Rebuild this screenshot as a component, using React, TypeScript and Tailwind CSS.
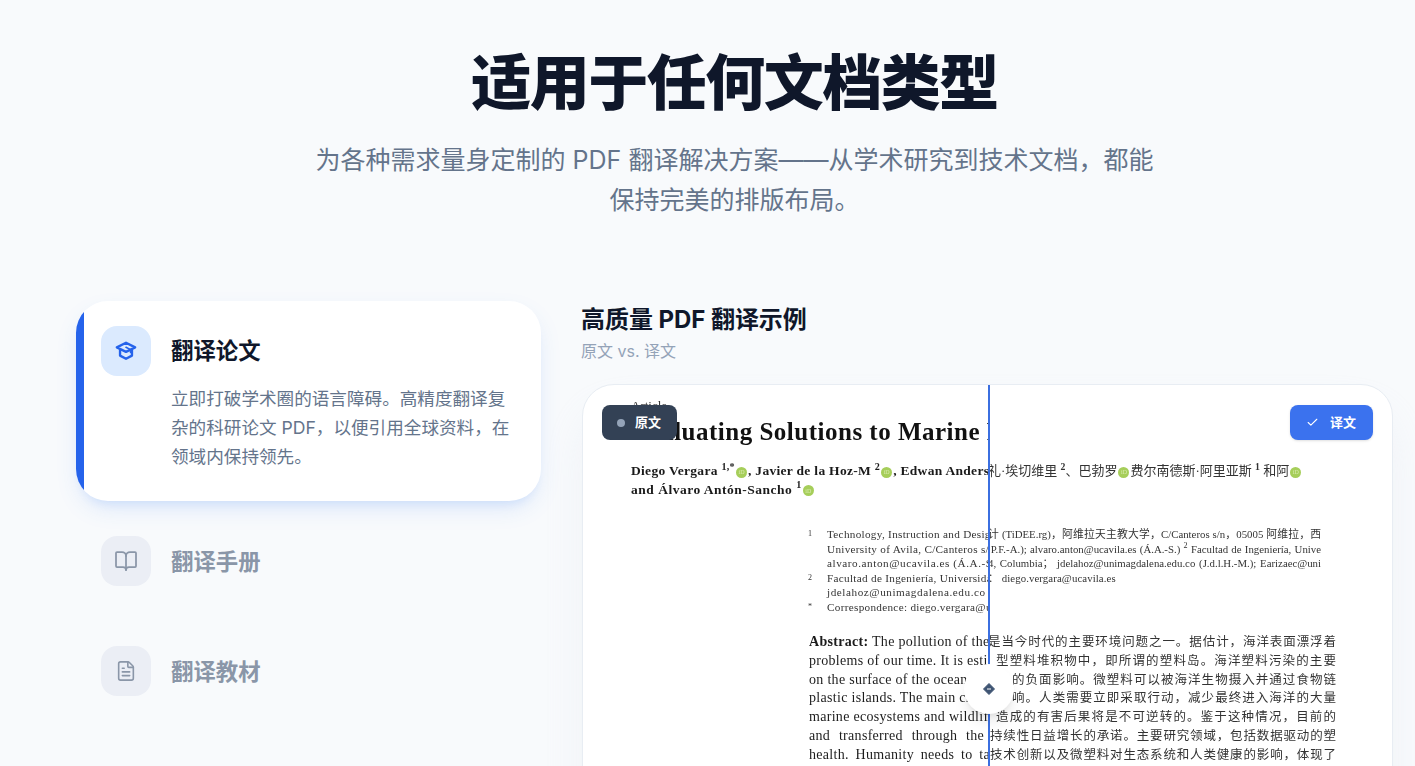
import { BookOpen, Check, FileText } from "lucide-react";

const SANS = "font-['Inter','Noto_Sans_CJK_SC',sans-serif]";

function Orcid() {
  return (
    <span className="inline-flex items-center justify-center w-[11px] h-[11px] rounded-full bg-[#a6ce5a] align-[1px] mx-[1px] overflow-hidden text-[6px] leading-none font-normal tracking-normal text-[#d9ecb0]">
      iD
    </span>
  );
}

function CapIcon() {
  return (
    <svg width="22" height="22" viewBox="0 0 24 24" fill="none" stroke="#2563eb" strokeWidth="2.6" strokeLinejoin="round" strokeLinecap="round">
      <path d="M12 3 22 8l-10 5L2 8z" />
      <path d="M5.500 10.500v6.500L12 20.500l6.500-3.500v-6.500" />
      <path d="M12 8l5 2.500v3" strokeWidth="1.800" />
    </svg>
  );
}

function DiamondIcon() {
  return (
    <svg width="12" height="12" viewBox="0 0 12 12">
      <path d="M6 0.500 11.500 6 6 11.500 0.500 6z" fill="#3f5573" stroke="#3f5573" strokeLinejoin="round" />
      <path d="M4 6h4" stroke="#fff" strokeWidth="1" />
    </svg>
  );
}

function NavRow({ title, children }: { title: string; children: React.ReactNode }) {
  return (
    <div className="flex items-center gap-5 h-[100px] pl-[25px]">
      <div className="w-[50px] h-[50px] rounded-2xl bg-[#ebeef5] flex items-center justify-center text-[#8a96a8]">{children}</div>
      <div className="mt-[2px] text-[22.400px] font-bold text-[#8a96a8]">{title}</div>
    </div>
  );
}

function Aff({ mark, wide, children }: { mark?: string; wide?: boolean; children: React.ReactNode }) {
  return (
    <div className="flex h-[14.500px] leading-[14.500px] text-[11.200px] text-[#333] whitespace-nowrap">
      <span className="w-[19px] shrink-0 text-[8px] tracking-normal">{mark}</span>
      <span className={wide ? "tracking-[0.55px]" : "tracking-[0.3px]"}>{children}</span>
    </div>
  );
}

function AbsL({ spread, children }: { spread?: string; children: React.ReactNode }) {
  return (
    <div className={`h-[18.800px] leading-[18.800px] text-[14px] tracking-[0.3px] text-[#1c1c1c] whitespace-nowrap ${spread ?? ""}`}>{children}</div>
  );
}

function AbsR({ indent, children }: { indent?: string; children: React.ReactNode }) {
  return <div className={`h-[18.800px] leading-[18.800px] text-[12.500px] text-[#333] [text-align-last:justify] ${indent ?? ""}`}>{children}</div>;
}

function AffR({ children }: { children: React.ReactNode }) {
  return <div className="h-[14.500px] leading-[14.500px] text-[10.800px] text-[#333] pr-[15px] [text-align-last:justify]">{children}</div>;
}

export default function App() {
  return (
    <div className={`h-[766px] overflow-hidden bg-[#f8fafc] pl-[76px] pr-[22px] ${SANS}`}>
      <header className="pt-[38px] text-center">
        <h1 className="text-6xl leading-[90px] font-extrabold tracking-tight text-[#0f172a]">适用于任何文档类型</h1>
        <p className="mt-3 text-[25px] leading-[40px] text-[#64748b] max-w-[860px] mx-auto">
          为各种需求量身定制的 PDF 翻译解决方案——从学术研究到技术文档，都能<br />保持完美的排版布局。
        </p>
      </header>

      <main className="flex gap-10 mt-[81px]">
        <aside className="w-[465px] shrink-0 flex flex-col gap-[10px]">
          <div className="relative overflow-hidden h-[200px] rounded-[32px] bg-white shadow-[0_10px_25px_-5px_rgba(59,130,246,0.18),0_8px_10px_-6px_rgba(59,130,246,0.12)] pl-[25px] pr-6 pt-[25px]">
            <span className="absolute left-0 top-0 bottom-0 w-2 bg-[#2563eb]" />
            <div className="flex items-center gap-5">
              <div className="w-[50px] h-[50px] rounded-2xl bg-[#dbeafe] flex items-center justify-center"><CapIcon /></div>
              <div className="text-[22.400px] font-bold text-[#0f172a]">翻译论文</div>
            </div>
            <p className="mt-2 ml-[70px] text-[17.600px] leading-[29px] text-[#64748b]">
              立即打破学术圈的语言障碍。高精度翻译复杂的科研论文 PDF，以便引用全球资料，在领域内保持领先。
            </p>
          </div>
          <NavRow title="翻译手册"><BookOpen size={24} strokeWidth={1.75} /></NavRow>
          <NavRow title="翻译教材"><FileText size={22} strokeWidth={1.75} /></NavRow>
        </aside>

        <section className="flex-1 min-w-0">
          <h2 className="mt-px text-2xl leading-[36px] font-bold text-[#0f172a] tracking-[-0.05px]">高质量 PDF 翻译示例</h2>
          <p className="mt-px text-base leading-[24px] text-[#94a3b8]">原文 vs. 译文</p>
          <div className="relative ml-px mt-[21px] h-[500px] rounded-[32px] bg-white border border-[#e8edf3] shadow-2xl shadow-slate-200/60 overflow-hidden font-['Liberation_Serif','Noto_Sans_CJK_SC',serif]">
            <div className="flex h-full blur-[0.3px]">
              <div className="w-[405px] shrink-0 overflow-hidden pl-[48px] pt-[13px]">
                <div className="h-[16px] leading-[16px] text-[13px] text-[#333]">Article</div>
                <div className="mt-[2px] h-[32px] leading-[32px] text-[25px] font-bold tracking-[0.5px] text-[#111] whitespace-nowrap">Evaluating Solutions to Marine Plastic</div>
                <div className="mt-[14px] h-[18.500px] leading-[18.500px] text-[13.500px] font-bold tracking-[0.3px] text-[#1a1a1a] whitespace-nowrap">
                  Diego Vergara <sup>1,*</sup><Orcid />, Javier de la Hoz-M <sup>2</sup><Orcid />, Edwan Anderson
                </div>
                <div className="h-[18.500px] leading-[18.500px] text-[13.500px] font-bold tracking-[0.5px] text-[#1a1a1a] whitespace-nowrap">
                  and Álvaro Antón-Sancho <sup>1</sup><Orcid />
                </div>
                <div className="mt-[28px] ml-[177px]">
                  <Aff mark="1">Technology, Instruction and Design for Engineering</Aff>
                  <Aff>University of Avila, C/Canteros s/n, 05005 Avila</Aff>
                  <Aff wide>alvaro.anton@ucavila.es (Á.A.-S.)</Aff>
                  <Aff mark="2">Facultad de Ingeniería, Universidad del Magdalena</Aff>
                  <Aff wide>jdelahoz@unimagdalena.edu.co (J.d.l.H.-M.)</Aff>
                  <Aff mark="*">Correspondence: diego.vergara@ucavila.es</Aff>
                </div>
                <div className="mt-[19px] ml-[178px]">
                  <AbsL><b>Abstract:</b> The pollution of the seas is one of the</AbsL>
                  <AbsL>problems of our time. It is estimated that</AbsL>
                  <AbsL>on the surface of the ocean forming the</AbsL>
                  <AbsL>plastic islands. The main challenge is</AbsL>
                  <AbsL>marine ecosystems and wildlife is a</AbsL>
                  <AbsL spread="[word-spacing:5px]">and transferred through the food chain</AbsL>
                  <AbsL spread="[word-spacing:3px]">health. Humanity needs to take action</AbsL>
                </div>
              </div>
              <div className="w-[348px] shrink-0 overflow-hidden pt-[13px] text-[#333]">
                <div className="h-[16px]" />
                <div className="mt-[2px] h-[32px]" />
                <div className="mt-[14px] h-[18.500px] leading-[18.500px] text-[13px] text-[#333] whitespace-nowrap">
                  礼·埃切维里 <sup className="font-bold">2</sup>、巴勃罗<Orcid />费尔南德斯·阿里亚斯 <sup className="font-bold">1</sup> 和阿<Orcid />
                </div>
                <div className="h-[18.500px]" />
                <div className="mt-[28px]">
                  <AffR>计 (TiDEE.rg)，阿维拉天主教大学，C/Canteros s/n，05005 阿维拉，西</AffR>
                  <AffR>.P.F.-A.); alvaro.anton@ucavila.es (Á.A.-S.) <sup>2</sup> Facultad de Ingeniería, Unive</AffR>
                  <AffR>4, Columbia； jdelahoz@unimagdalena.edu.co (J.d.l.H.-M.); Earizaec@uni</AffR>
                  <div className="h-[14.500px] leading-[14.500px] text-[10.800px] tracking-[0.1px] text-[#333] whitespace-nowrap">：&nbsp;diego.vergara@ucavila.es</div>
                </div>
                <div className="mt-[48px]">
                  <AbsR>是当今时代的主要环境问题之一。据估计，海洋表面漂浮着</AbsR>
                  <AbsR indent="pl-2">型塑料堆积物中，即所谓的塑料岛。海洋塑料污染的主要</AbsR>
                  <AbsR indent="pl-6">的负面影响。微塑料可以被海洋生物摄入并通过食物链</AbsR>
                  <AbsR indent="pl-6">响。人类需要立即采取行动，减少最终进入海洋的大量</AbsR>
                  <AbsR indent="pl-2">造成的有害后果将是不可逆转的。鉴于这种情况，目前的</AbsR>
                  <AbsR indent="pl-0.5">持续性日益增长的承诺。主要研究领域，包括数据驱动的塑</AbsR>
                  <AbsR indent="pl-0.5">技术创新以及微塑料对生态系统和人类健康的影响，体现了</AbsR>
                </div>
              </div>
            </div>

            <div className="absolute top-0 bottom-0 left-[405px] w-[2px] bg-[#3b6fe0]" />
            <div className="absolute top-[279px] left-[381px] w-[50px] h-[50px] rounded-full bg-white shadow-lg flex items-center justify-center"><DiamondIcon /></div>
            <div className={`absolute top-[20px] left-[19px] w-[75px] h-[35px] rounded-lg bg-[#334155] flex items-center gap-[10px] pl-[15px] text-[13px] font-bold text-white ${SANS}`}>
              <span className="w-2 h-2 rounded-full bg-[#94a3b8]" />原文
            </div>
            <div className={`absolute top-[20px] right-[19px] w-[83px] h-[35px] rounded-lg bg-[#3b72ee] flex items-center gap-[11px] pl-[16px] text-[13px] font-bold text-white shadow-sm ${SANS}`}>
              <Check size={13} strokeWidth={2} />译文
            </div>
          </div>
        </section>
      </main>
    </div>
  );
}
